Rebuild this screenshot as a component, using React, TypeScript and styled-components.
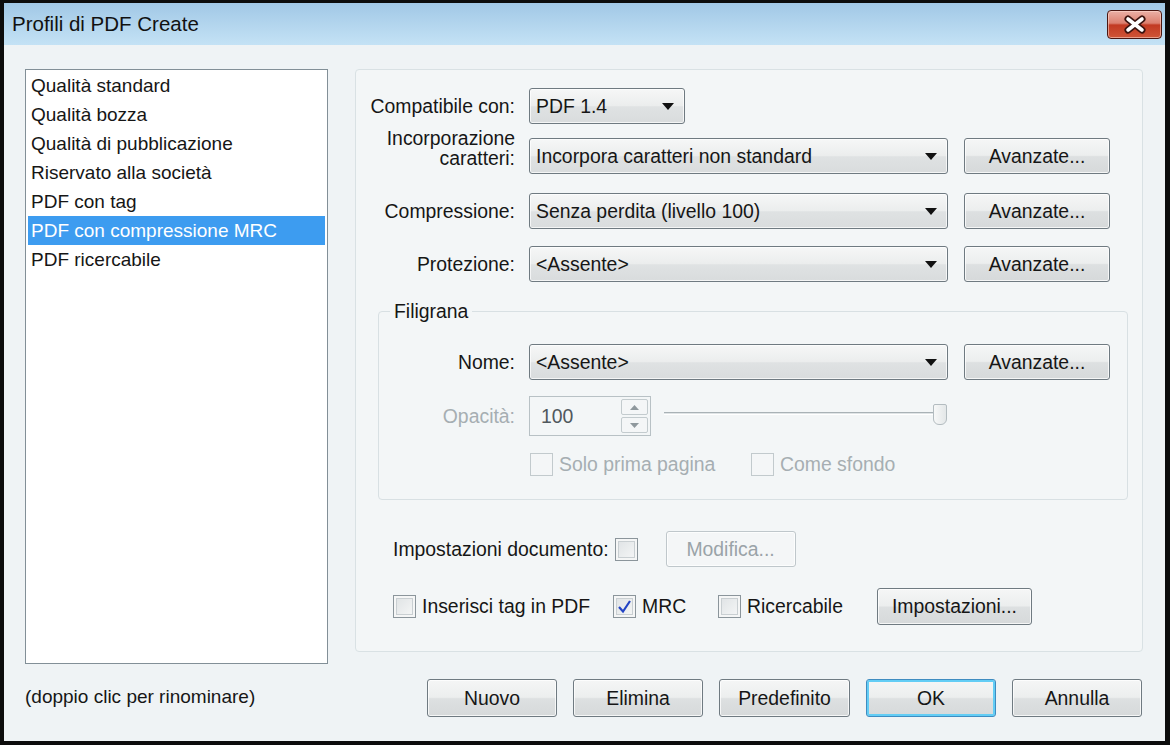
import React from "react";
import styled, { createGlobalStyle } from "styled-components";

const GlobalStyle = createGlobalStyle`
  html, body { margin: 0; padding: 0; background: #0c0c0c; }
  body { font-family: "Liberation Sans", Arial, sans-serif; color: #161616; }
  * { box-sizing: border-box; }
`;

const FS = 19.4;

const Frame = styled.div`
  width: 1170px;
  height: 745px;
  padding: 3px 5px 4px 4px;
  background: #0c0c0c;
`;

const Win = styled.div`
  height: 100%;
  display: flex;
  flex-direction: column;
  background: #eff3f5;
`;

const TitleBar = styled.div`
  flex: none;
  height: 42px;
  display: flex;
  align-items: center;
  justify-content: space-between;
  padding: 0 3px 0 8px;
  background: linear-gradient(#a1c8e6, #c4e2f5);
  font-size: 20.5px;
  color: #111;
`;

const CloseBtn = styled.div`
  width: 55px;
  height: 29px;
  display: flex;
  align-items: center;
  justify-content: center;
  border: 1px solid #4a1712;
  border-radius: 4px;
  background: linear-gradient(#eab0a6 0%, #dc806f 45%, #c23a22 52%, #cf5537 100%);
  box-shadow: inset 0 0 0 1px rgba(255, 220, 210, 0.55);
`;

const Body = styled.div`
  flex: 1;
  display: flex;
  gap: 27px;
  padding: 24px 22px 0 21px;
`;

const LeftCol = styled.div`
  width: 303px;
  display: flex;
  flex-direction: column;
`;

const ProfileList = styled.div`
  height: 595px;
  background: #fff;
  border: 1px solid #828f97;
  padding: 1px 2px;
`;

const ProfileItem = styled.div<{ $selected?: boolean }>`
  height: 29px;
  line-height: 29px;
  padding-left: 3px;
  font-size: 19px;
  white-space: nowrap;
  background: ${(p) => (p.$selected ? "#3d9cf0" : "transparent")};
  color: ${(p) => (p.$selected ? "#fff" : "#161616")};
`;

const Hint = styled.div`
  margin-top: 22px;
  font-size: 19px;
  line-height: 22px;
`;

const RightCol = styled.div`
  width: 788px;
  display: flex;
  flex-direction: column;
`;

const Panel = styled.div`
  height: 583px;
  border: 1px solid #d9e1e4;
  border-radius: 4px;
  background: #f3f6f7;
  padding: 18px 0 0 9px;
  font-size: ${FS}px;
`;

const FormRow = styled.div<{ $mt?: number; $h?: number }>`
  display: flex;
  align-items: center;
  height: ${(p) => p.$h ?? 36}px;
  margin-top: ${(p) => p.$mt ?? 0}px;
`;

const Label = styled.div<{ $w: number; $disabled?: boolean; $lift?: number }>`
  flex: none;
  width: ${(p) => p.$w}px;
  margin-right: 14px;
  text-align: right;
  line-height: 20px;
  color: ${(p) => (p.$disabled ? "#a6aeb2" : "#161616")};
  transform: translateY(${(p) => -(p.$lift ?? 0)}px);
`;

const Combo = styled.div<{ $w: number }>`
  flex: none;
  width: ${(p) => p.$w}px;
  height: 36px;
  display: flex;
  align-items: center;
  justify-content: space-between;
  padding: 0 10px 0 6px;
  border: 1px solid #6f7a81;
  border-radius: 3px;
  background: linear-gradient(#f6f7f7, #ebeded 50%, #dfe2e3 52%, #d9dcdd);
  box-shadow: inset 0 0 0 1px rgba(255, 255, 255, 0.7);
  white-space: nowrap;
`;

const Button = styled.div<{ $w: number; $h?: number; $ml?: number; $disabled?: boolean; $default?: boolean }>`
  flex: none;
  width: ${(p) => p.$w}px;
  height: ${(p) => p.$h ?? 36}px;
  margin-left: ${(p) => p.$ml ?? 0}px;
  display: flex;
  align-items: center;
  justify-content: center;
  border: 1px solid ${(p) => (p.$disabled ? "#bfc7cb" : p.$default ? "#3f8cc0" : "#6f7a81")};
  border-radius: 3px;
  background: ${(p) =>
    p.$disabled
      ? "#f4f6f7"
      : "linear-gradient(#f5f6f6, #eceeee 48%, #dde0e1 52%, #d6d9da)"};
  box-shadow: ${(p) =>
    p.$default
      ? "inset 0 0 0 2px #63cdf5"
      : "inset 0 0 0 1px rgba(255, 255, 255, 0.75)"};
  font-size: ${FS}px;
  color: ${(p) => (p.$disabled ? "#9aa3a8" : "#161616")};
  white-space: nowrap;
`;

const GroupBox = styled.fieldset`
  margin: 18px 14px 0 13px;
  width: 750px;
  height: 200px;
  padding: 22px 0 0 0;
  border: 1px solid #d8e0e3;
  border-radius: 4px;
`;

const Legend = styled.legend`
  margin-left: 11px;
  padding: 0 4px;
  line-height: 22px;
`;

const Spinner = styled.div`
  flex: none;
  width: 122px;
  height: 40px;
  display: flex;
  align-items: center;
  justify-content: space-between;
  padding: 0 2px 0 11px;
  border: 1px solid #b8c1c5;
  background: #f3f6f7;
  color: #50585d;
`;

const SpinCol = styled.div`
  display: flex;
  flex-direction: column;
  gap: 2px;
`;

const SpinBtn = styled.div`
  width: 27px;
  height: 16px;
  display: flex;
  align-items: center;
  justify-content: center;
  border: 1px solid #c3cbce;
  border-radius: 2px;
  background: #f4f6f7;
`;

const Slider = styled.div`
  position: relative;
  flex: none;
  width: 283px;
  height: 40px;
  margin-left: 13px;
`;

const Track = styled.div`
  position: absolute;
  left: 0;
  right: 4px;
  top: 16px;
  height: 3px;
  border-top: 1px solid #a9b2b6;
  border-bottom: 1px solid #ffffff;
  background: #dfe4e6;
`;

const Thumb = styled.div`
  position: absolute;
  right: 0;
  top: 8px;
  width: 14px;
  height: 21px;
  border: 1px solid #b3bcc0;
  border-radius: 2px 2px 6px 6px;
  background: linear-gradient(90deg, #f7f8f8, #e3e7e8);
`;

const CheckRow = styled.div<{ $mt: number; $ml: number }>`
  display: flex;
  align-items: center;
  margin-top: ${(p) => p.$mt}px;
  margin-left: ${(p) => p.$ml}px;
`;

const CheckItem = styled.div<{ $w?: number; $ml?: number; $disabled?: boolean }>`
  flex: none;
  width: ${(p) => (p.$w ? `${p.$w}px` : "auto")};
  margin-left: ${(p) => p.$ml ?? 0}px;
  display: flex;
  align-items: center;
  gap: 6px;
  color: ${(p) => (p.$disabled ? "#a6aeb2" : "#161616")};
  white-space: nowrap;
`;

const Box = styled.div<{ $disabled?: boolean }>`
  flex: none;
  width: 23px;
  height: 23px;
  display: flex;
  align-items: center;
  justify-content: center;
  border: 1px solid ${(p) => (p.$disabled ? "#c2cacd" : "#8b959b")};
  background: ${(p) =>
    p.$disabled ? "#f4f6f7" : "linear-gradient(135deg, #dde1e3, #f7f8f8)"};
  box-shadow: ${(p) => (p.$disabled ? "none" : "inset 0 0 0 2px #f5f6f6, inset 0 0 0 3px #c9cfd2")};
`;

const DocRow = styled.div`
  display: flex;
  align-items: center;
  height: 36px;
  margin: 31px 0 0 28px;
`;

const ActionRow = styled.div`
  display: flex;
  justify-content: flex-end;
  gap: 16px;
  margin-top: 27px;
  padding-right: 1px;
`;

const Arrow = () => (
  <svg width="12" height="7" viewBox="0 0 12 7">
    <polygon points="0,0 12,0 6,7" fill="#111" />
  </svg>
);

const SpinArrow = ({ up }: { up?: boolean }) => (
  <svg width="9" height="5" viewBox="0 0 9 5">
    <polygon points={up ? "0,5 9,5 4.5,0" : "0,0 9,0 4.5,5"} fill="#8f989d" />
  </svg>
);

const Check = ({ checked, disabled }: { checked?: boolean; disabled?: boolean }) => (
  <Box $disabled={disabled}>
    {checked && (
      <svg width="15" height="15" viewBox="0 0 15 15">
        <path d="M2 8 L6 12.5 L13 2" fill="none" stroke="#2344c4" strokeWidth="2.2" />
      </svg>
    )}
  </Box>
);

const profiles = [
  "Qualità standard",
  "Qualità bozza",
  "Qualità di pubblicazione",
  "Riservato alla società",
  "PDF con tag",
  "PDF con compressione MRC",
  "PDF ricercabile",
];

const App = () => {
  return (
    <Frame>
      <GlobalStyle />
      <Win>
        <TitleBar>
          <span>Profili di PDF Create</span>
          <CloseBtn>
            <svg width="26" height="19" viewBox="0 0 26 19">
              <path d="M6 4 L20 15 M20 4 L6 15" stroke="#3b1410" strokeWidth="7" strokeLinecap="round" />
              <path d="M6 4 L20 15 M20 4 L6 15" stroke="#ffffff" strokeWidth="3.6" strokeLinecap="round" />
            </svg>
          </CloseBtn>
        </TitleBar>

        <Body>
          <LeftCol>
            <ProfileList>
              {profiles.map((name) => (
                <ProfileItem key={name} $selected={name === "PDF con compressione MRC"}>
                  {name}
                </ProfileItem>
              ))}
            </ProfileList>
            <Hint>(doppio clic per rinominare)</Hint>
          </LeftCol>

          <RightCol>
            <Panel>
              <FormRow>
                <Label $w={150}>Compatibile con:</Label>
                <Combo $w={156}>
                  PDF 1.4
                  <Arrow />
                </Combo>
              </FormRow>
              <FormRow $mt={14}>
                <Label $w={150} $lift={8}>
                  Incorporazione
                  <br />
                  caratteri:
                </Label>
                <Combo $w={419}>
                  Incorpora caratteri non standard
                  <Arrow />
                </Combo>
                <Button $w={146} $ml={16}>Avanzate...</Button>
              </FormRow>
              <FormRow $mt={19}>
                <Label $w={150}>Compressione:</Label>
                <Combo $w={419}>
                  Senza perdita (livello 100)
                  <Arrow />
                </Combo>
                <Button $w={146} $ml={16}>Avanzate...</Button>
              </FormRow>
              <FormRow $mt={17}>
                <Label $w={150}>Protezione:</Label>
                <Combo $w={419}>
                  {"<Assente>"}
                  <Arrow />
                </Combo>
                <Button $w={146} $ml={16}>Avanzate...</Button>
              </FormRow>

              <GroupBox>
                <Legend>Filigrana</Legend>
                <FormRow>
                  <Label $w={136}>Nome:</Label>
                  <Combo $w={419}>
                    {"<Assente>"}
                    <Arrow />
                  </Combo>
                  <Button $w={146} $ml={16}>Avanzate...</Button>
                </FormRow>
                <FormRow $mt={16} $h={40}>
                  <Label $w={136} $disabled>Opacità:</Label>
                  <Spinner>
                    100
                    <SpinCol>
                      <SpinBtn><SpinArrow up /></SpinBtn>
                      <SpinBtn><SpinArrow /></SpinBtn>
                    </SpinCol>
                  </Spinner>
                  <Slider>
                    <Track />
                    <Thumb />
                  </Slider>
                </FormRow>
                <CheckRow $mt={17} $ml={151}>
                  <CheckItem $w={221} $disabled>
                    <Check disabled />
                    Solo prima pagina
                  </CheckItem>
                  <CheckItem $disabled>
                    <Check disabled />
                    Come sfondo
                  </CheckItem>
                </CheckRow>
              </GroupBox>

              <DocRow>
                <span>Impostazioni documento:</span>
                <CheckItem $ml={6}>
                  <Check />
                </CheckItem>
                <Button $w={130} $ml={28} $disabled>Modifica...</Button>
              </DocRow>

              <CheckRow $mt={21} $ml={28}>
                <CheckItem $w={220}>
                  <Check />
                  Inserisci tag in PDF
                </CheckItem>
                <CheckItem $w={105}>
                  <Check checked />
                  MRC
                </CheckItem>
                <CheckItem $w={159}>
                  <Check />
                  Ricercabile
                </CheckItem>
                <Button $w={155} $h={37}>Impostazioni...</Button>
              </CheckRow>
            </Panel>

            <ActionRow>
              <Button $w={130} $h={38}>Nuovo</Button>
              <Button $w={130} $h={38}>Elimina</Button>
              <Button $w={131} $h={38}>Predefinito</Button>
              <Button $w={130} $h={38} $default>OK</Button>
              <Button $w={130} $h={38}>Annulla</Button>
            </ActionRow>
          </RightCol>
        </Body>
      </Win>
    </Frame>
  );
};

export default App;
